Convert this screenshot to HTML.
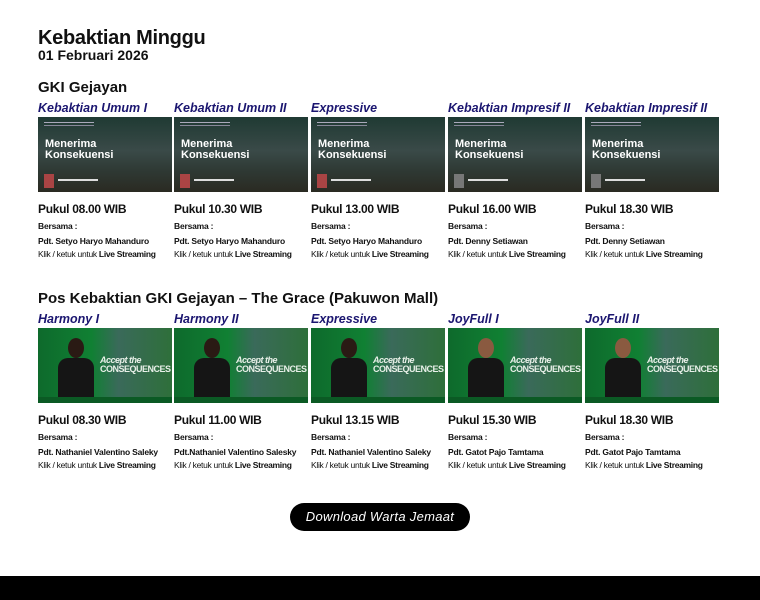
<!DOCTYPE html>
<html><head><meta charset="utf-8"><style>
*{margin:0;padding:0;box-sizing:border-box}
body{width:760px;height:600px;background:#fff;font-family:"Liberation Sans",sans-serif;color:#111;position:relative;overflow:hidden}
.abs{position:absolute}
h1{position:absolute;left:38px;top:27px;font-size:20px;font-weight:bold;letter-spacing:-0.3px}
.date{left:38px;top:47px;font-size:14px;font-weight:bold}
.sec{left:38px;font-size:15px;font-weight:bold}
.col{position:absolute;width:136px}
.sub{font-size:12.5px;font-weight:bold;font-style:italic;color:#1b1670;white-space:nowrap;height:16px}
.img{width:134px;height:75px;margin-top:0;position:relative;overflow:hidden}
.a{background:linear-gradient(180deg,#1f3a33 0%,#3a4a48 45%,#2f3a35 70%,#2a2a22 100%)}
.a .t{position:absolute;left:7px;top:22px;color:#fff;font-size:11px;line-height:11px;font-weight:bold}
.a .sm{position:absolute;left:6px;top:5px;width:50px;height:1px;background:#aab;box-shadow:0 3px 0 #889}
.a .p{position:absolute;left:6px;top:57px;width:10px;height:14px;background:#a44}
.a .n{position:absolute;left:20px;top:62px;width:40px;height:2px;background:#ddd}
.b{background:linear-gradient(90deg,#0e6a2c 0%,#108033 40%,#3a6a5a 60%,#2e6f3a 100%)}
.b .man{position:absolute;left:20px;top:10px;width:36px;height:65px}
.b .head{position:absolute;left:10px;top:0;width:16px;height:20px;border-radius:50%;background:#2a1a14}
.b .body{position:absolute;left:0;top:20px;width:36px;height:45px;background:#151515;border-radius:10px 10px 0 0}
.b .tt{position:absolute;left:62px;top:28px;color:#e8f0e8;font-size:9px;font-weight:bold;letter-spacing:-0.5px;line-height:9px}
.b .bar{position:absolute;left:0;bottom:0;width:134px;height:6px;background:#0b5a24}
.time{font-size:12px;font-weight:bold;margin-top:10px;letter-spacing:-0.3px}
.s{font-size:8.5px;font-weight:bold;margin-top:5px;white-space:nowrap;letter-spacing:-0.2px}
.k{font-size:8.5px;margin-top:3px;white-space:nowrap;letter-spacing:-0.3px}
.btn{position:absolute;left:290px;top:503px;width:180px;height:28px;background:#000;border-radius:14px;color:#fff;font-style:italic;font-size:13px;text-align:center;line-height:28px;letter-spacing:0.3px}
.foot{position:absolute;left:0;top:576px;width:760px;height:24px;background:#000}
</style></head><body>
<h1>Kebaktian Minggu</h1>
<div class="abs date">01 Februari 2026</div>
<div class="abs sec" style="top:79px">GKI Gejayan</div>

<div class="col" style="left:38px;top:101px"><div class="sub">Kebaktian Umum I</div><div class="img a"><div class="sm"></div><div class="t">Menerima<br>Konsekuensi</div><div class="p"></div><div class="n"></div></div><div class="time">Pukul 08.00 WIB</div><div class="s">Bersama :</div><div class="s">Pdt. Setyo Haryo Mahanduro</div><div class="k">Klik / ketuk untuk <b>Live Streaming</b></div></div>
<div class="col" style="left:174px;top:101px"><div class="sub">Kebaktian Umum II</div><div class="img a"><div class="sm"></div><div class="t">Menerima<br>Konsekuensi</div><div class="p"></div><div class="n"></div></div><div class="time">Pukul 10.30 WIB</div><div class="s">Bersama :</div><div class="s">Pdt. Setyo Haryo Mahanduro</div><div class="k">Klik / ketuk untuk <b>Live Streaming</b></div></div>
<div class="col" style="left:311px;top:101px"><div class="sub">Expressive</div><div class="img a"><div class="sm"></div><div class="t">Menerima<br>Konsekuensi</div><div class="p"></div><div class="n"></div></div><div class="time">Pukul 13.00 WIB</div><div class="s">Bersama :</div><div class="s">Pdt. Setyo Haryo Mahanduro</div><div class="k">Klik / ketuk untuk <b>Live Streaming</b></div></div>
<div class="col" style="left:448px;top:101px"><div class="sub">Kebaktian Impresif II</div><div class="img a"><div class="sm"></div><div class="t">Menerima<br>Konsekuensi</div><div class="p" style="background:#777"></div><div class="n"></div></div><div class="time">Pukul 16.00 WIB</div><div class="s">Bersama :</div><div class="s">Pdt. Denny Setiawan</div><div class="k">Klik / ketuk untuk <b>Live Streaming</b></div></div>
<div class="col" style="left:585px;top:101px"><div class="sub">Kebaktian Impresif II</div><div class="img a"><div class="sm"></div><div class="t">Menerima<br>Konsekuensi</div><div class="p" style="background:#777"></div><div class="n"></div></div><div class="time">Pukul 18.30 WIB</div><div class="s">Bersama :</div><div class="s">Pdt. Denny Setiawan</div><div class="k">Klik / ketuk untuk <b>Live Streaming</b></div></div>

<div class="abs sec" style="top:290px">Pos Kebaktian GKI Gejayan – The Grace (Pakuwon Mall)</div>

<div class="col" style="left:38px;top:312px"><div class="sub">Harmony I</div><div class="img b"><div class="man"><div class="head"></div><div class="body"></div></div><div class="tt"><i>Accept the</i><br>CONSEQUENCES</div><div class="bar"></div></div><div class="time">Pukul 08.30 WIB</div><div class="s">Bersama :</div><div class="s">Pdt. Nathaniel Valentino Saleky</div><div class="k">Klik / ketuk untuk <b>Live Streaming</b></div></div>
<div class="col" style="left:174px;top:312px"><div class="sub">Harmony II</div><div class="img b"><div class="man"><div class="head"></div><div class="body"></div></div><div class="tt"><i>Accept the</i><br>CONSEQUENCES</div><div class="bar"></div></div><div class="time">Pukul 11.00 WIB</div><div class="s">Bersama :</div><div class="s">Pdt.Nathaniel Valentino Salesky</div><div class="k">Klik / ketuk untuk <b>Live Streaming</b></div></div>
<div class="col" style="left:311px;top:312px"><div class="sub">Expressive</div><div class="img b"><div class="man"><div class="head"></div><div class="body"></div></div><div class="tt"><i>Accept the</i><br>CONSEQUENCES</div><div class="bar"></div></div><div class="time">Pukul 13.15 WIB</div><div class="s">Bersama :</div><div class="s">Pdt. Nathaniel Valentino Saleky</div><div class="k">Klik / ketuk untuk <b>Live Streaming</b></div></div>
<div class="col" style="left:448px;top:312px"><div class="sub">JoyFull I</div><div class="img b"><div class="man"><div class="head" style="background:#8a5a40"></div><div class="body"></div></div><div class="tt"><i>Accept the</i><br>CONSEQUENCES</div><div class="bar"></div></div><div class="time">Pukul 15.30 WIB</div><div class="s">Bersama :</div><div class="s">Pdt. Gatot Pajo Tamtama</div><div class="k">Klik / ketuk untuk <b>Live Streaming</b></div></div>
<div class="col" style="left:585px;top:312px"><div class="sub">JoyFull II</div><div class="img b"><div class="man"><div class="head" style="background:#8a5a40"></div><div class="body"></div></div><div class="tt"><i>Accept the</i><br>CONSEQUENCES</div><div class="bar"></div></div><div class="time">Pukul 18.30 WIB</div><div class="s">Bersama :</div><div class="s">Pdt. Gatot Pajo Tamtama</div><div class="k">Klik / ketuk untuk <b>Live Streaming</b></div></div>

<div class="btn">Download Warta Jemaat</div>
<div class="foot"></div>
</body></html>
